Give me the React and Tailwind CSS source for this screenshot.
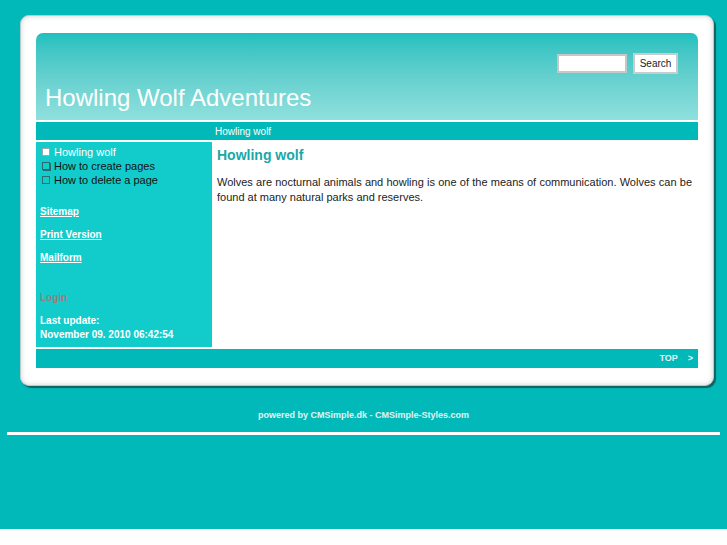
export default function App() {
  const font = { fontFamily: '"Liberation Sans", Arial, sans-serif' };
  return (
    <div style={font} className="bg-[#01b9b8] pt-[15px] pb-[94px]">
      <div className="ml-[20px] w-[694px] rounded-[9px] border border-[#b9cccc] bg-white pt-[17px] pb-[17px] pl-[15px] pr-[15px] shadow-[2px_2px_1px_rgba(20,70,70,0.75),inset_0_0_5px_rgba(60,90,90,0.25)]">
        <div className="flex h-[87px] flex-col rounded-t-[7px] bg-gradient-to-b from-[#1cc0bf] to-[#90e0dd]">
          <div className="flex items-center justify-end gap-[6px] pt-[20px] pr-[20px]">
            <div className="h-[19px] w-[70px] border-2 border-[#c4c8c8] bg-white"></div>
            <div className="flex h-[21px] w-[45px] items-center justify-center border-2 border-[#c8cccc] bg-white text-[10px] text-[#222]">
              Search
            </div>
          </div>
          <div className="flex-1"></div>
          <div className="pb-[10px] pl-[9px] text-[24px] leading-none text-white">Howling Wolf Adventures</div>
        </div>
        <div className="mt-[2px] flex h-[18px] items-center bg-[#01b9b8] pl-[179px] text-[10px] text-white">
          Howling wolf
        </div>
        <div className="mt-[2px] flex">
          <div className="h-[205px] w-[176px] bg-[#12cccc] pt-[3px]">
            <div className="text-[11px] leading-[14px]">
              <div className="flex items-center pl-[6px]">
                <span className="mr-[4px] h-[8px] w-[8px] border border-[#9aa] bg-white"></span>
                <span className="text-white">Howling wolf</span>
              </div>
              <div className="flex items-center pl-[6px]">
                <span className="relative mr-[4px] h-[8px] w-[8px] border border-[#2a6a6a] bg-[#12cccc] shadow-[1px_1px_0_#2a6a6a]"></span>
                <span className="text-[#111]">How to create pages</span>
              </div>
              <div className="flex items-center pl-[6px]">
                <span className="mr-[4px] h-[8px] w-[8px] border border-[#2a7070]"></span>
                <span className="text-[#111]">How to delete a page</span>
              </div>
            </div>
            <div className="pl-[4px] text-[10px] font-bold leading-[14px] text-white">
              <div className="mt-[18px] underline">Sitemap</div>
              <div className="mt-[9px] underline">Print Version </div>
              <div className="mt-[9px] underline">Mailform</div>
              <div className="mt-[26px] text-[#9a7c7c]">Login</div>
              <div className="mt-[9px]">Last update:</div>
              <div>November 09. 2010 06:42:54</div>
            </div>
          </div>
          <div className="ml-[1px] flex-1 pl-[4px] pr-[6px] pt-[4px]">
            <div className="text-[14px] font-bold leading-[18px] text-[#18a8a8]">Howling wolf</div>
            <p className="mt-[11px] text-justify text-[11px] leading-[15px] text-[#222]">
              Wolves are nocturnal animals and howling is one of the means of communication. Wolves can be found at many natural parks and reserves.
            </p>
          </div>
        </div>
        <div className="mt-[2px] flex h-[19px] items-center justify-end bg-[#01b9b8] pr-[5px] text-[9px] font-bold text-[#e4f4f4]">
          <span>TOP</span>
          <span className="ml-[10px]">&gt;</span>
        </div>
      </div>
      <div className="mt-[23px] text-center text-[9px] font-bold leading-[12px] text-[#e0f4f4]">
        powered by CMSimple.dk - CMSimple-Styles.com
      </div>
      <div className="mx-[7px] mt-[11px] h-[3px] bg-white"></div>
    </div>
  );
}
